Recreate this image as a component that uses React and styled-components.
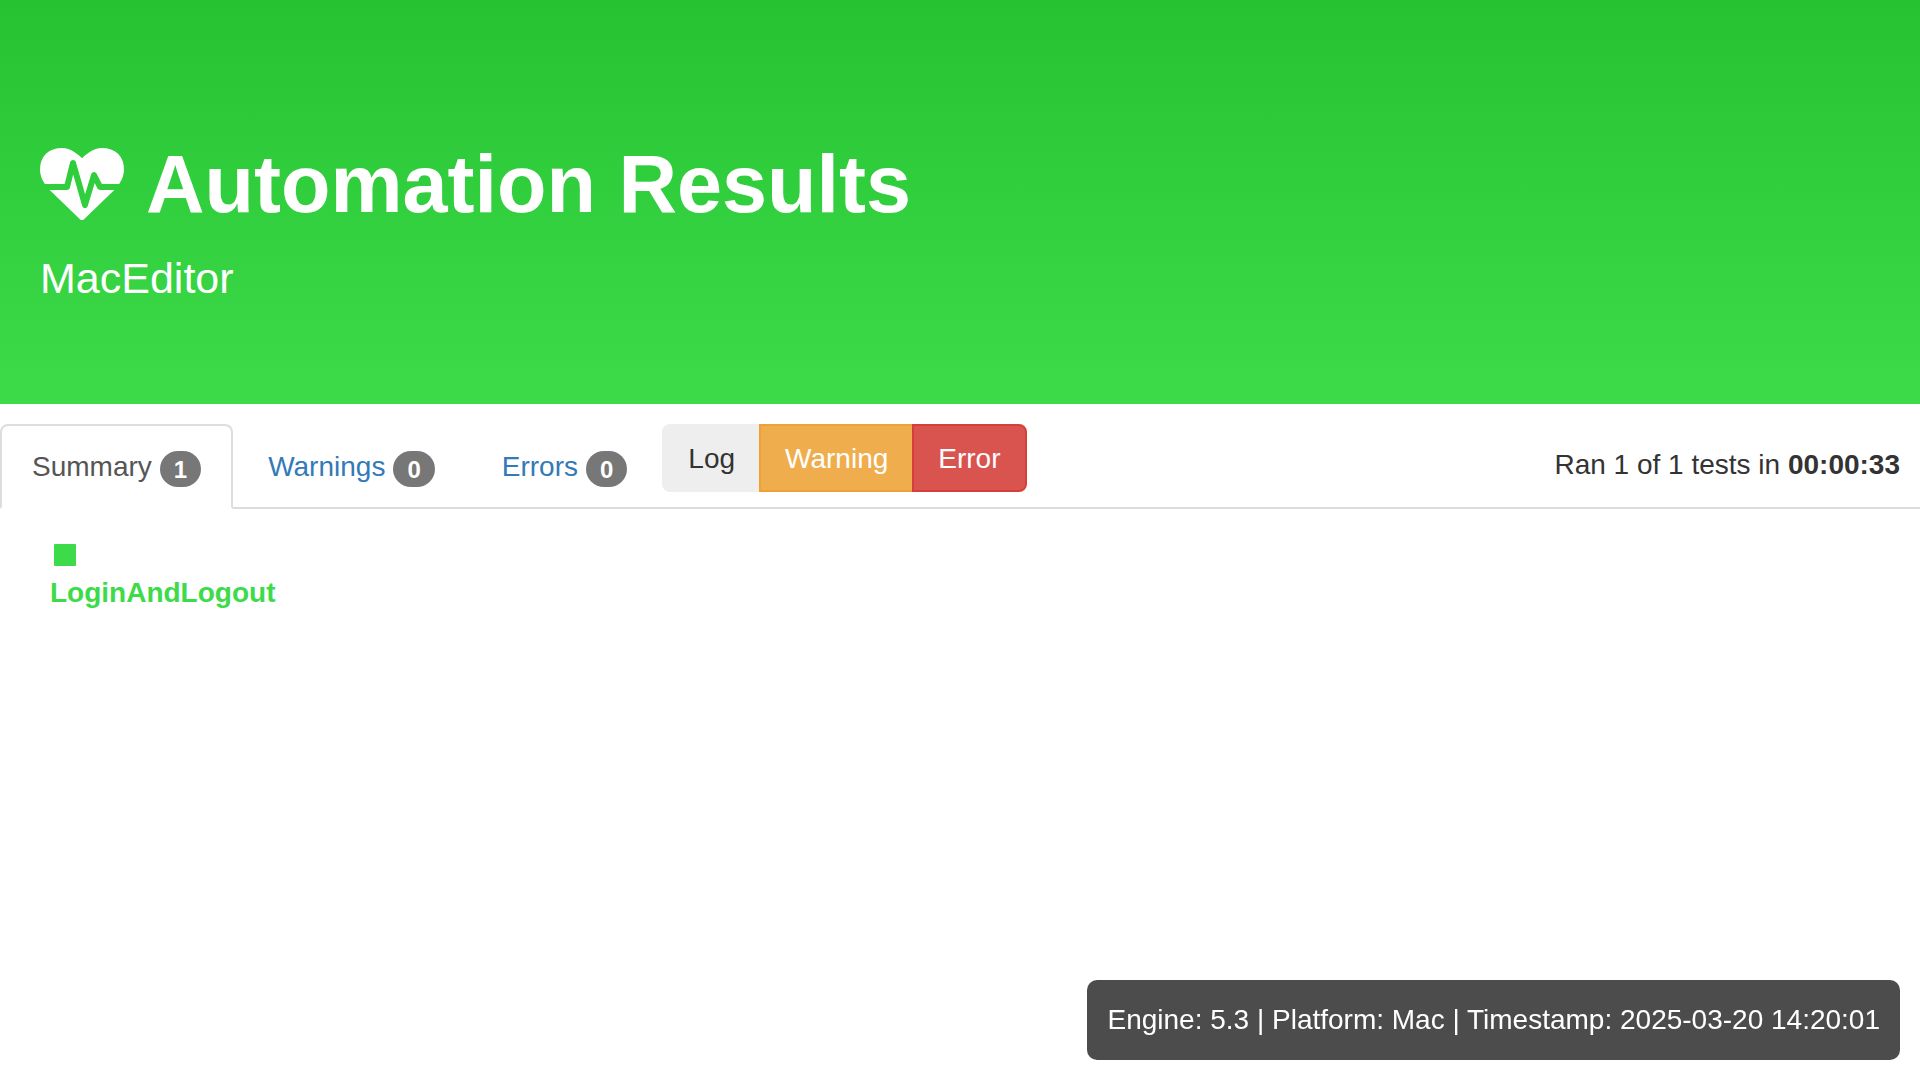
import React, { useState } from "react";
import styled, { createGlobalStyle } from "styled-components";

const GlobalStyle = createGlobalStyle`
  * {
    box-sizing: border-box;
  }
  body {
    margin: 0;
    background: #fff;
    color: #333;
    font-family: "Liberation Sans", Helvetica, Arial, sans-serif;
    font-size: 28px;
    line-height: 40px;
  }
`;

const Banner = styled.header`
  padding: 138px 40px 96px;
  background: linear-gradient(to bottom, #26c231, #3ddb4a);
  color: #fff;
`;

const Title = styled.h1`
  display: flex;
  align-items: center;
  gap: 22px;
  margin: 0 0 18px;
  font-size: 81px;
  line-height: 92px;
  font-weight: 700;
`;

const HeartIcon = styled.svg`
  width: 84px;
  height: 72px;
  flex: none;
  fill: currentColor;
`;

const Subtitle = styled.p`
  margin: 0;
  font-size: 43px;
  line-height: 60px;
`;

const TabBar = styled.nav`
  display: flex;
  align-items: flex-start;
  margin-top: 20px;
  border-bottom: 2px solid #ddd;
`;

const Tab = styled.a`
  display: flex;
  align-items: center;
  gap: 8px;
  margin: 0 3px -2px 0;
  padding: 20px 30px;
  border: 2px solid ${(p) => (p.$active ? "#ddd" : "transparent")};
  border-bottom-color: ${(p) => (p.$active ? "#fff" : "transparent")};
  border-radius: 8px 8px 0 0;
  background: ${(p) => (p.$active ? "#fff" : "transparent")};
  color: ${(p) => (p.$active ? "#555" : "#337ab7")};
  line-height: 41px;
  text-decoration: none;
`;

const Badge = styled.span`
  margin-top: 4px;
  padding: 7px 14px 5px;
  border-radius: 20px;
  background: #777;
  color: #fff;
  font-size: 24px;
  line-height: 24px;
  font-weight: 700;
`;

const FilterGroup = styled.div`
  display: flex;
`;

const tones = {
  plain: { face: "#eee", edge: "#eee", text: "#333" },
  warning: { face: "#f0ad4e", edge: "#eea236", text: "#fff" },
  danger: { face: "#d9534f", edge: "#d43f3a", text: "#fff" },
};

const FilterButton = styled.button`
  margin: 0 0 0 -2px;
  padding: 13px 24px 11px;
  border: 2px solid ${(p) => tones[p.$tone].edge};
  background: ${(p) => tones[p.$tone].face};
  color: ${(p) => tones[p.$tone].text};
  font: inherit;
  cursor: pointer;

  &:first-child {
    margin-left: 0;
    border-radius: 8px 0 0 8px;
  }
  &:last-child {
    border-radius: 0 8px 8px 0;
  }
`;

const RunInfo = styled.p`
  margin: 21px 20px 0 auto;
`;

const Results = styled.main`
  display: flex;
  flex-direction: column;
  align-items: flex-start;
  padding: 35px 50px;
`;

const TestMark = styled.span`
  width: 22px;
  height: 22px;
  margin: 0 0 7px 4px;
  border-radius: 1px;
  background: #3ddb4a;
`;

const TestLink = styled.a`
  color: #3ddb4a;
  font-weight: 700;
  text-decoration: none;
`;

const BuildInfo = styled.footer`
  position: fixed;
  right: 20px;
  bottom: 20px;
  padding: 20px;
  border-radius: 10px;
  background: rgba(0, 0, 0, 0.7);
  color: #fff;
`;

const tabs = [
  { name: "Summary", count: 1 },
  { name: "Warnings", count: 0 },
  { name: "Errors", count: 0 },
];

export default function App() {
  const [active, setActive] = useState("Summary");
  return (
    <>
      <GlobalStyle />
      <Banner>
        <Title>
          <HeartIcon viewBox="0 0 1792 1536" aria-hidden="true">
            <path d="M1280 896h305q-5 6-10 10.5t-9 7.5l-3 4-623 600q-18 18-44 18t-44-18l-624-602q-5-2-21-20h369q22 0 39.5-13.5t22.5-34.5l70-281 190 667q6 20 23 33t39 13q21 0 38-13t23-33l146-485 56 112q18 35 57 35zm512-428q0 145-103 300h-369l-111-221q-8-17-25.5-27t-36.5-8q-45 5-56 46l-129 430-196-686q-6-20-23.5-33t-39.5-13-39 13.5-22 34.5l-116 464h-423q-103-155-103-300 0-220 127-344t351-124q62 0 126.5 21.5t120 58 95.5 68.5 76 68q36-36 76-68t95.5-68.5 120-58 126.5-21.5q224 0 351 124t127 344z" />
          </HeartIcon>
          Automation Results
        </Title>
        <Subtitle>MacEditor</Subtitle>
      </Banner>
      <TabBar>
        {tabs.map((tab) => (
          <Tab
            key={tab.name}
            href={`#${tab.name.toLowerCase()}`}
            $active={tab.name === active}
            onClick={() => setActive(tab.name)}
          >
            {tab.name}
            <Badge>{tab.count}</Badge>
          </Tab>
        ))}
        <FilterGroup>
          <FilterButton type="button" $tone="plain">Log</FilterButton>
          <FilterButton type="button" $tone="warning">Warning</FilterButton>
          <FilterButton type="button" $tone="danger">Error</FilterButton>
        </FilterGroup>
        <RunInfo>
          Ran 1 of 1 tests in <strong>00:00:33</strong>
        </RunInfo>
      </TabBar>
      <Results>
        <TestMark />
        <TestLink href="#LoginAndLogout">LoginAndLogout</TestLink>
      </Results>
      <BuildInfo>
        Engine: 5.3 | Platform: Mac | Timestamp: 2025-03-20 14:20:01
      </BuildInfo>
    </>
  );
}
